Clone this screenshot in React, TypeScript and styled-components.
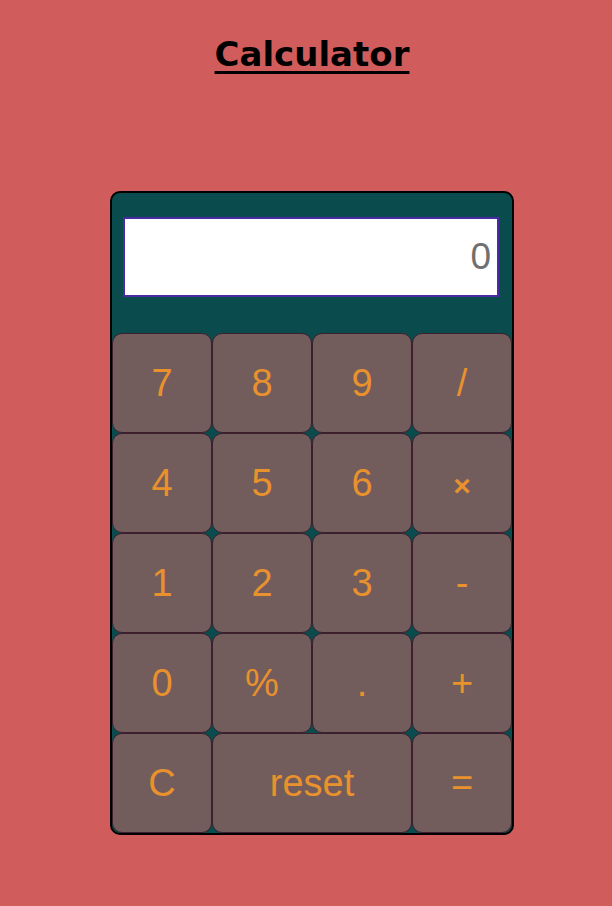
import React from "react";
import styled, { createGlobalStyle } from "styled-components";

const Global = createGlobalStyle`
  html, body {
    margin: 0;
    padding: 0;
    background: #d05d5c;
  }
  body {
    font-family: "Liberation Sans", Arial, sans-serif;
  }
`;

const Page = styled.div`
  display: flex;
  flex-direction: column;
  align-items: center;
  min-height: 906px;
  padding-left: 12px;
`;

const Title = styled.h1`
  margin: 35px 0 0;
  font-family: "DejaVu Sans", "Liberation Sans", sans-serif;
  font-weight: 700;
  font-size: 34px;
  line-height: 39px;
  color: #000;
  text-decoration: underline;
  text-decoration-thickness: 3px;
  text-underline-offset: 5px;
`;

const Calc = styled.div`
  margin-top: 117px;
  width: 400px;
  background: #0a4c4e;
  border: 2px solid #000;
  border-radius: 10px;
  overflow: hidden;
  display: flex;
  flex-direction: column;
`;

const Display = styled.div`
  box-sizing: border-box;
  margin: 24px 13px 36px 11px;
  height: 80px;
  background: #fff;
  border: 2px solid #4a2ba6;
  display: flex;
  align-items: center;
  justify-content: flex-end;
  padding-right: 6px;
  font-size: 37px;
  color: #707070;
`;

const Keys = styled.div`
  display: grid;
  grid-template-columns: repeat(4, 100px);
  grid-auto-rows: 100px;
`;

const Key = styled.button<{ $span?: number }>`
  grid-column: span ${(p) => p.$span ?? 1};
  box-sizing: border-box;
  margin: 0;
  background: #735c5c;
  border: 1px solid #3d1f2e;
  border-radius: 10px;
  color: #e8912d;
  font-family: "Liberation Sans", Arial, sans-serif;
  font-size: 38px;
  padding: 0;
  cursor: pointer;
`;

const Times = styled.span`
  font-weight: 700;
  font-size: 30px;
`;

const keys: { id: string; label: React.ReactNode; span?: number }[] = [
  { id: "7", label: "7" }, { id: "8", label: "8" }, { id: "9", label: "9" }, { id: "/", label: "/" },
  { id: "4", label: "4" }, { id: "5", label: "5" }, { id: "6", label: "6" }, { id: "x", label: <Times>×</Times> },
  { id: "1", label: "1" }, { id: "2", label: "2" }, { id: "3", label: "3" }, { id: "-", label: "-" },
  { id: "0", label: "0" }, { id: "%", label: "%" }, { id: ".", label: "." }, { id: "+", label: "+" },
  { id: "C", label: "C" }, { id: "reset", label: "reset", span: 2 }, { id: "=", label: "=" },
];

export default function App() {
  return (
    <Page>
      <Global />
      <Title>Calculator</Title>
      <Calc>
        <Display>0</Display>
        <Keys>
          {keys.map((k) => (
            <Key key={k.id} $span={k.span}>
              {k.label}
            </Key>
          ))}
        </Keys>
      </Calc>
    </Page>
  );
}
